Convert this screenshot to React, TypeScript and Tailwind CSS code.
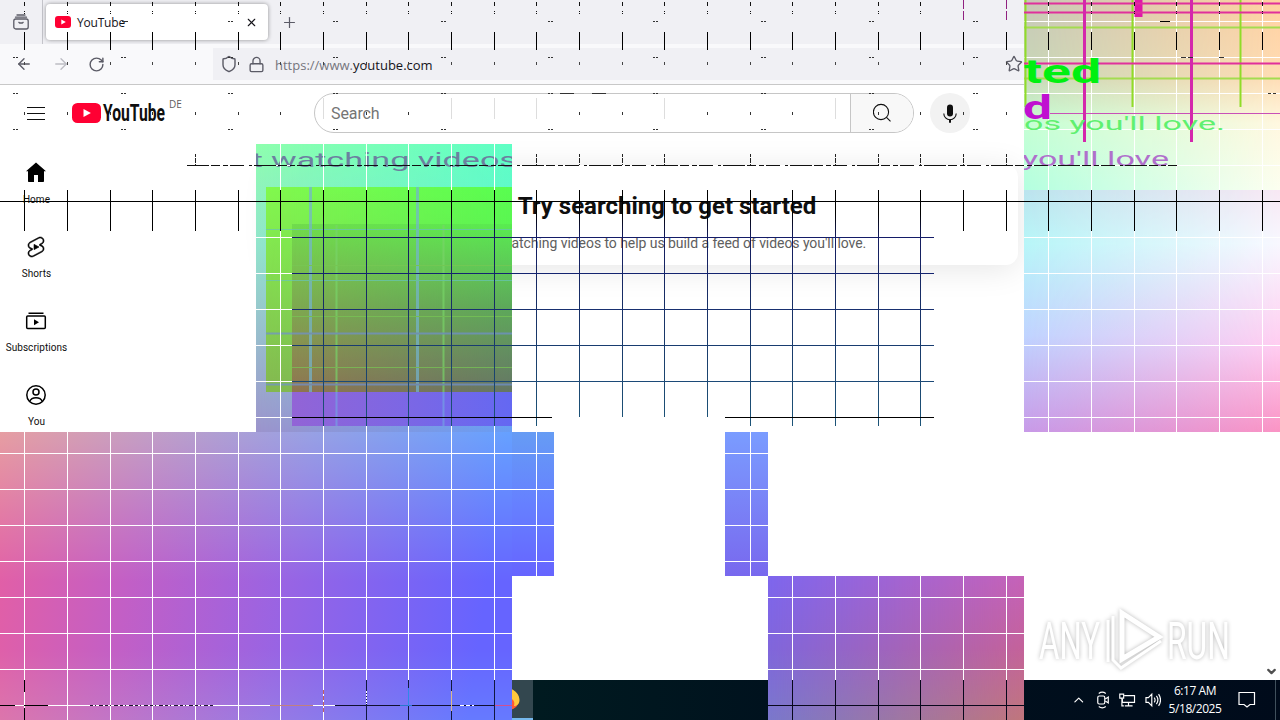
import type { ReactNode } from 'react'
import { ArrowLeft, ArrowRight, ChevronDown, ChevronUp, Lock, Plus, RotateCw, Shield, Star, X } from 'lucide-react'

// grid columns sit 42.67px apart, rows 36px apart
const COLS = [
  24, 67, 110, 152, 195, 238, 280, 323, 366, 408, 451, 494, 536, 579, 622, 664, 707, 750, 792, 835, 878, 920, 963,
  1006, 1048, 1091, 1134, 1176, 1219, 1262,
]
const ROWS = [21, 57, 93, 129, 165, 201, 237, 273, 309, 345, 381, 417, 453, 489, 525, 561, 597, 633, 669, 705]
const DASHES = [13, 121, 228, 333, 441, 548, 653, 761, 869, 973]

export default function App() {
  return (
    <div className="relative flex h-[720px] w-[1280px] flex-col overflow-hidden bg-white font-['Open_Sans',sans-serif]">
      <TabStrip />
      <Toolbar />
      <Masthead />
      <div className="flex min-h-0 flex-1">
        <Sidebar />
        <Feed />
      </div>
      <Taskbar />
      <GlitchBlocks />
      <GlitchLines />
    </div>
  )
}

function TabStrip() {
  return (
    <div className="flex h-11 shrink-0 bg-[#f0f0f4] text-[#15141a]">
      <div className="flex w-[43px] items-center justify-center border-r border-[#c4c4ca] pr-px">
        <svg width="16" height="16" viewBox="0 0 16 16" fill="none" stroke="#5b5b66" strokeWidth="1.3">
          <path d="M2.5 3.2h11M4 1h8" strokeLinecap="round" />
          <rect x="0.8" y="5" width="14.4" height="10" rx="2" />
          <path d="M5.5 8l1.2 1h2.6l1.2-1" />
        </svg>
      </div>
      <div className="mt-1 ml-[3px] flex h-9 w-[222px] items-center rounded bg-white pr-[10px] pl-[9px] shadow-[0_0_4px_rgba(0,0,0,0.4)]">
        <svg width="16" height="12" viewBox="0 0 16 12">
          <rect width="16" height="12" rx="3" fill="#ff0033" />
          <path d="M6.3 3.4v5.2L10.8 6z" fill="#fff" />
        </svg>
        <span className="mt-px ml-[6px] flex-1 text-xs tracking-[-0.2px]">YouTube</span>
        <X size={13} strokeWidth={2} />
      </div>
      <div className="flex items-center pl-[13px] text-[#5b5b66]">
        <Plus size={17} strokeWidth={1.7} />
      </div>
    </div>
  )
}

function Toolbar() {
  return (
    <div className="flex h-[41px] shrink-0 items-center border-b border-[#c8c8c8] bg-[#f9f9fb] text-[#5b5b66]">
      <div className="flex w-[213px] items-center pl-[15px]">
        <ArrowLeft size={18} strokeWidth={1.8} />
        <ArrowRight size={18} strokeWidth={1.8} className="ml-[19px] text-[#bdbdc4]" />
        <RotateCw size={17} strokeWidth={2} className="ml-[18px]" />
      </div>
      <div className="flex h-8 w-[840px] items-center bg-[#f0f0f4] pl-[7px]">
        <Shield size={18} strokeWidth={1.9} />
        <Lock size={17} strokeWidth={1.9} className="ml-[10px]" />
        <span className="mt-[3px] ml-[10px] w-[730px] text-[13px] text-[#75757d]">
          https://www.<span className="text-[#15141a]">youtube.com</span>
        </span>
        <Star size={18} strokeWidth={1.8} />
      </div>
    </div>
  )
}

function Masthead() {
  return (
    <div className="flex h-14 shrink-0 items-center pl-[27px] font-[Roboto,sans-serif]">
      <div className="flex h-[13px] w-[18px] flex-col justify-between">
        <div className="h-px bg-[#0f0f0f]" />
        <div className="h-px bg-[#0f0f0f]" />
        <div className="h-px bg-[#0f0f0f]" />
      </div>
      <svg width="94" height="30" viewBox="0 0 94 30" className="ml-[27px]">
        <rect y="5" width="29" height="20" rx="5.5" fill="#ff0033" />
        <path d="M11.5 11v8l7.4-4z" fill="#fff" />
        <text x="31" y="23.200" fontFamily="Roboto" fontWeight="700" fontSize="23" textLength="62" lengthAdjust="spacingAndGlyphs" fill="#0f0f0f">
          YouTube
        </text>
      </svg>
      <span className="mb-[18px] ml-[3px] w-[20px] font-['Open_Sans',sans-serif] text-[10px] text-[#606060]">DE</span>
      <div className="ml-[125px] flex h-10 w-[600px] overflow-hidden rounded-full border border-[#c6c6c6]">
        <div className="flex w-[536px] items-center border-r border-[#c6c6c6] pt-px pl-4 text-base tracking-[-0.1px] text-[#757575]">
          Search
        </div>
        <div className="flex flex-1 items-center justify-center bg-[#f8f8f8]">
          <svg width="18" height="20" viewBox="0 0 18 20" fill="none" stroke="#0f0f0f" strokeWidth="1.1">
            <circle cx="8" cy="9" r="7.6" />
            <path d="M13.5 14.4l4 4" />
          </svg>
        </div>
      </div>
      <div className="ml-4 flex size-10 items-center justify-center rounded-full bg-[#f2f2f2]">
        <svg width="14" height="19" viewBox="0 0 14 19" fill="none" stroke="#0f0f0f">
          <rect x="4" y="0.5" width="6" height="12" rx="3" fill="#0f0f0f" stroke="none" />
          <path d="M.8 9.5a6.2 6.2 0 0 0 12.4 0" strokeWidth="1.1" />
          <path d="M7 15.5v3.2" strokeWidth="2" />
        </svg>
      </div>
    </div>
  )
}

function SidebarItem({ label, children }: { label: string; children: ReactNode }) {
  return (
    <div className="flex h-[74px] flex-col items-center pt-4 text-[10px] leading-[14px] text-[#0f0f0f]">
      <svg width="24" height="24" viewBox="0 0 24 24">{children}</svg>
      <span className="mt-2 pl-px tracking-[0.05px]">{label}</span>
    </div>
  )
}

function Sidebar() {
  return (
    <div className="w-[72px] pt-[4px] font-[Roboto,sans-serif]">
      <SidebarItem label="Home">
        <path d="M12 1.5 2 10.300h2V20c0 .6.4 1 1 1h5v-7h4v7h5c.6 0 1-.4 1-1v-9.700h2z" />
      </SidebarItem>
      <SidebarItem label="Shorts">
        <path d="M10 14.65v-5.3L15 12l-5 2.65zm7.77-4.33-1.2-.5L18 9.06c1.84-.96 2.53-3.23 1.56-5.06s-3.24-2.53-5.07-1.56L6 6.94c-1.29.68-2.07 2.04-2 3.49.07 1.42.93 2.67 2.22 3.25.03.01 1.2.5 1.2.5L6 14.93c-1.83.97-2.53 3.24-1.56 5.07.97 1.83 3.24 2.53 5.07 1.56l8.5-4.5c1.29-.68 2.06-2.04 1.99-3.49-.07-1.42-.94-2.68-2.23-3.25zm-.23 5.86-8.5 4.5c-1.34.71-3.01.2-3.72-1.14-.71-1.34-.2-3.01 1.14-3.72l2.04-1.08v-1.21l-.69-.28-1.11-.46c-.99-.41-1.65-1.35-1.7-2.41-.05-1.06.52-2.06 1.46-2.56l8.5-4.5c1.34-.71 3.01-.2 3.72 1.14.71 1.34.2 3.01-1.14 3.72L15.5 9.26v1.21l1.8.74c.99.41 1.65 1.35 1.7 2.41.05 1.06-.52 2.06-1.46 2.56z" stroke="#000" strokeWidth="0.6" />
      </SidebarItem>
      <SidebarItem label="Subscriptions">
        <rect x="2.700" y="7" width="18.600" height="12.600" rx="1" fill="none" stroke="#000" strokeWidth="1.5" />
        <path d="M4.500 3.500h15v1.500h-15zM10 10.300v6l5-3z" />
      </SidebarItem>
      <SidebarItem label="You">
        <g fill="none" stroke="#000" strokeWidth="1.5">
          <circle cx="12" cy="12" r="9.200" />
          <circle cx="12" cy="9" r="3" />
          <path d="M5.700 18.500c1-2.600 3.300-3.800 6.300-3.800s5.300 1.200 6.300 3.800" />
        </g>
      </SidebarItem>
    </div>
  )
}

function Feed() {
  return (
    <div className="relative flex-1 pt-6 pl-[202px] font-[Roboto,sans-serif]">
      <div className="flex h-[100px] w-[744px] flex-col items-center rounded-xl bg-white pt-[25px] pl-[42px] shadow-[0_4px_32px_rgba(0,0,0,0.1)]">
        <h1 className="text-2xl leading-8 font-bold text-[#0f0f0f]">Try searching to get started</h1>
        <p className="mt-[11px] text-sm leading-5 tracking-[-0.06px] text-[#606060]">
          Start watching videos to help us build a feed of videos you&apos;ll love.
        </p>
      </div>
      <ChevronDown size={13} strokeWidth={4} className="absolute right-[2px] bottom-[2px] text-[#505050]" />
      <Watermark />
    </div>
  )
}

function Watermark() {
  return (
    <svg
      width="204"
      height="76"
      viewBox="0 0 204 76"
      className="absolute right-[42px] bottom-0 drop-shadow-[0_0_2px_rgba(0,0,0,0.28)]"
    >
      <g fill="#fff" fontFamily="Roboto" fontWeight="400" fontSize="51">
        <text x="5" y="55" textLength="61" lengthAdjust="spacingAndGlyphs">ANY</text>
        <text x="133" y="55" textLength="63" lengthAdjust="spacingAndGlyphs">RUN</text>
      </g>
      <g fill="none" stroke="#fff" strokeWidth="5">
        <path d="M88 9v46l37-22z" />
        <path d="M79 12v44l8 8 40-27M74 16v42" strokeWidth="3" />
      </g>
    </svg>
  )
}

function Taskbar() {
  return (
    <div className="flex h-10 shrink-0 bg-linear-to-r from-[#001b20] from-40% via-[#00121e] via-60% to-[#000b1b] text-white">
      <div className="ml-[485px] flex w-12 items-center justify-center border-b-2 border-[#76b9ed] bg-[#33474f]">
        <svg width="24" height="24" viewBox="0 0 24 24">
          <circle cx="12" cy="13" r="10" fill="#ff5a36" />
          <path d="M13 1c6 3 9.500 7 9.500 12 0 4-3 6-5.500 6 1-4 0-6-4-8z" fill="#ffc83e" />
        </svg>
      </div>
      <div className="ml-[538px] flex w-[90px] items-center gap-[9px]">
        <ChevronUp size={16} strokeWidth={1.8} />
        <svg width="15" height="18" viewBox="0 0 14 18" fill="none" stroke="#fff" strokeWidth="1.2">
          <rect x="1.500" y="5" width="7" height="8" rx="1.500" />
          <path d="M9 8l3-2v6l-3-2M2.500 2.500c2-1.500 5-1.500 7 0M2.500 15.500c2 1.500 5 1.500 7 0" />
        </svg>
        <svg width="17" height="14" viewBox="0 0 17 14" fill="none" stroke="#fff" strokeWidth="1.200">
          <path d="M5.500 2.500H16v7H3.500V6M9.800 9.500v3.500M6 13h8M.8 1h4v4h-4zM3 5v8h2" />
        </svg>
        <svg width="17" height="16" viewBox="0 0 17 16" fill="none" stroke="#fff" strokeWidth="1.200">
          <path d="M1 5.500h2.500L7 2v12l-3.500-3.500H1zM9.500 5.500q1.800 2.500 0 5M11.800 3.800q3 4.200 0 8.400M14 2q4 6 0 12" />
        </svg>
      </div>
      <div className="ml-[3px] flex w-[62px] flex-col items-center justify-center text-xs leading-[18px] tracking-[-0.45px]">
        <span>6:17 AM</span>
        <span>5/18/2025</span>
      </div>
      <svg width="18" height="18" viewBox="0 0 18 18" fill="none" stroke="#fff" strokeWidth="1.200" className="mt-[11px] ml-[12px]">
        <path d="M1 1.500h15.500v12H12L9 16l-3-2.500H1z" />
      </svg>
      <div className="ml-[19px] w-px bg-[#40505c]" />
    </div>
  )
}

// Two vertical ramps, the second one faded in from the left.
function Ramp({ className, left, right }: { className: string; left: string; right: string }) {
  return (
    <div className={`absolute ${className}`}>
      <div className={`absolute inset-0 ${left}`} />
      <div className={`absolute inset-0 [mask-image:linear-gradient(to_right,transparent,black)] ${right}`} />
    </div>
  )
}

function GlitchBlocks() {
  return (
    <>
      <div className="absolute top-[432px] left-0 h-[288px] w-[512px] bg-[linear-gradient(to_bottom,#006400,#000000_52%,#000000_75%,#002400),linear-gradient(98deg,#e65fa2,#c25fc6_27%,#9864e4_56%,#6664ff_92%)] bg-blend-screen" />
      <Ramp
        className="top-[144px] left-[256px] h-[288px] w-[256px]"
        left="bg-linear-to-b from-[#8effae] via-[#92e4cc] via-35% to-[#9c94cc]"
        right="bg-linear-to-b from-[#5effc4] via-[#60f4d0] via-35% to-[#689cf4]"
      />
      <Ramp
        className="top-[187px] left-[266px] h-[205px] w-[246px] opacity-95"
        left="bg-linear-to-b from-[#82fa48] to-[#84b84a]"
        right="bg-linear-to-b from-[#58ff4a] to-[#5ccc50]"
      />
      <Ramp
        className="top-[224px] left-[292px] h-[168px] w-[220px]"
        left="bg-linear-to-b from-[#70dc4c] via-[#7ea850] to-[#907450]"
        right="bg-linear-to-b from-[#58ec50] via-[#5ca85a] to-[#647664]"
      />
      <div className="absolute top-[392px] left-[292px] h-[34px] w-[220px] bg-linear-to-r from-[#9264d6] to-[#6468f2]" />
      <div className="absolute top-[432px] left-[512px] h-[144px] w-[42px] bg-linear-to-b from-[#669cf4] via-[#6680ff] to-[#6664ff]" />
      <div className="absolute top-[432px] left-[725px] h-[144px] w-[43px] bg-linear-to-b from-[#7a9cff] to-[#7868ee]" />
      <Ramp
        className="top-[576px] left-[768px] h-[144px] w-[256px]"
        left="bg-linear-to-b from-[#7e66ee] via-[#8066dc] to-[#7a78cc]"
        right="bg-linear-to-b from-[#c662b8] via-[#c4629a] to-[#c0767c]"
      />
      <Ramp
        className="top-0 left-[1024px] h-[190px] w-[256px]"
        left="bg-[linear-gradient(to_bottom,#c8c8b8,#c8d8b8_40%,#c6ffd4_65%,#b4ffe0)]"
        right="bg-[linear-gradient(to_bottom,#ffd0a0,#ffdcb4_40%,#fff8e0_65%,#fcfff0)]"
      />
      <Ramp
        className="top-[190px] left-[1024px] h-[242px] w-[256px]"
        left="bg-[linear-gradient(to_bottom,#bce4ee,#b8f6f8_22%,#c0d4ff_60%,#c89ae8)]"
        right="bg-[linear-gradient(to_bottom,#f8e8f4,#f8f8ff_22%,#ffccf0_65%,#fa94c4)]"
      />
    </>
  )
}

interface LineProps {
  at: number
  from: number
  to: number
  color?: string
  size?: number
  dash?: string
}

function V({ at, from, to, color = '#000', size = 1, dash }: LineProps) {
  return <line x1={at + 0.5} x2={at + 0.5} y1={from} y2={to} stroke={color} strokeWidth={size} strokeDasharray={dash} />
}

function H({ at, from, to, color = '#000', size = 1, dash }: LineProps) {
  return <line y1={at + 0.5} y2={at + 0.5} x1={from} x2={to} stroke={color} strokeWidth={size} strokeDasharray={dash} />
}

function GlitchLines() {
  return (
    <svg width="1280" height="720" viewBox="0 0 1280 720" className="pointer-events-none absolute inset-0">
      <defs>
        <clipPath id="mid"><rect x="256" y="144" width="256" height="288" /></clipPath>
        <clipPath id="right"><rect x="1024" width="256" height="432" /></clipPath>
        <linearGradient id="navy" gradientUnits="userSpaceOnUse" x1="0" y1="190" x2="0" y2="426">
          <stop offset="0.1" stopColor="#000" />
          <stop offset="0.2" stopColor="#141c60" />
          <stop offset="0.6" stopColor="#183668" />
          <stop offset="1" stopColor="#1c5478" />
        </linearGradient>
      </defs>

      {/* ghost lines in the green block */}
      <g clipPath="url(#mid)">
        <g opacity="0.7">
          {[310, 417].map((x) => <V key={x} at={x} from={187} to={392} color="#74b4d0" size={3} />)}
          {[336, 443].map((x) => <V key={x} at={x} from={225} to={392} color="#78d468" size={2} />)}
          {[336, 443].map((x) => <V key={x} at={x} from={392} to={426} color="#74a0e4" size={2} />)}
          {[229, 280].map((y) => <H key={y} at={y} from={266} to={512} color="#68c4b8" />)}
          {[333, 384].map((y) => <H key={y} at={y} from={266} to={512} color="#7090d0" size={2} />)}
          {[265, 316, 367].map((y) => <H key={y} at={y} from={292} to={512} color="#78c854" />)}
        </g>
        <text x="251" y="167" fontFamily="Roboto" fontSize="21" fill="#6c80a0" textLength="12" lengthAdjust="spacingAndGlyphs">t</text>
        <text x="271" y="167" fontFamily="Roboto" fontSize="21" fill="#6c80a0" textLength="246" lengthAdjust="spacingAndGlyphs">
          watching videos
        </text>
      </g>

      {/* white grid over the coloured blocks */}
      {COLS.filter((x) => x < 512).map((x) => (
        <V key={x} at={x} from={x > 256 ? (x < 292 ? 144 : 426) : 432} to={720} color="#fff" />
      ))}
      {COLS.filter((x) => x > 292 && x < 512).map((x) => <V key={x} at={x} from={144} to={190} color="#fff" />)}
      {[536, 750].map((x) => <V key={x} at={x} from={432} to={576} color="#fff" />)}
      {COLS.filter((x) => x > 768 && x < 1024).map((x) => <V key={x} at={x} from={576} to={680} color="#fff" />)}
      {COLS.filter((x) => x > 1024).map((x) => <V key={x} at={x} from={0} to={432} color="#fff" />)}
      {ROWS.filter((y) => y > 432).map((y) => <H key={y} at={y} from={0} to={512} color="#fff" />)}
      {ROWS.filter((y) => y > 144 && y < 432).map((y) => <H key={y} at={y} from={256} to={292} color="#fff" />)}
      {ROWS.filter((y) => y < 432).map((y) => <H key={y} at={y} from={1024} to={1280} color="#fff" />)}
      {[453, 489, 525, 561].map((y) => (
        <g key={y}>
          <H at={y} from={512} to={554} color="#fff" />
          <H at={y} from={725} to={768} color="#fff" />
        </g>
      ))}
      {[597, 633, 669].map((y) => <H key={y} at={y} from={768} to={1024} color="#fff" />)}

      {/* right block */}
      <g clipPath="url(#right)">
        {[27, 78].map((y) => <H key={y} at={y} from={1024} to={1280} color="#a4dc50" size={2} />)}
        {[1025, 1132, 1240].map((x) => <V key={x} at={x} from={0} to={107} color="#90dc28" size={2} />)}
        <V at={1138} from={0} to={17} color="#e018a8" size={8} />
        {[3, 12, 63].map((y) => <H key={y} at={y} from={1024} to={1280} color="#e0309c" size={2} />)}
        <H at={113} from={1050} to={1280} color="#c850b8" />
        {[1084, 1191].map((x) => <V key={x} at={x} from={0} to={142} color="#d428ac" size={3} />)}
        <g fontFamily="Roboto">
          <text x="1024" y="83" fontSize="34" fontWeight="700" fill="#00f010" textLength="77" lengthAdjust="spacingAndGlyphs">ted</text>
          <text x="1023" y="118.500" fontSize="34" fontWeight="700" fill="#c010d0" textLength="29" lengthAdjust="spacingAndGlyphs">d</text>
          <text x="1024" y="130" fontSize="19" fill="#60f070" textLength="201" lengthAdjust="spacingAndGlyphs">os you&apos;ll love.</text>
          <text x="1022" y="166" fontSize="21" fill="#b070cc" textLength="147" lengthAdjust="spacingAndGlyphs">you&apos;ll love</text>
        </g>
      </g>

      {/* black ticks along the browser chrome */}
      {COLS.map((x) => (
        <g key={x}>
          <V at={x} from={2} to={14} color={x > 950 && x < 1024 ? '#901878' : '#111'} dash="4 5 1 1" />
          <V at={x} from={32} to={50} />
          {x < 1024 && <V at={x} from={62} to={65} color="#444" />}
          {x < 1024 && <V at={x} from={112} to={115} color="#333" />}
          {(x < 300 || x > 950) && <V at={x} from={190} to={231} />}
        </g>
      ))}
      {[963, 1006].map((x) => <V key={x} at={x} from={0} to={21} color="#902080" dash="9 2" />)}
      {[323, 451, 494, 536, 664, 835].map((x) => <V key={x} at={x} from={98} to={119} color="#ddd" />)}
      {DASHES.map((x) =>
        [21, 57, 93, 129].map((y) => (y === 21 && x < 200 ? null : <H key={`${x}-${y}`} at={y} from={x} to={x + 6} color="#333" dash="2 1" />)),
      )}
      <H at={21} from={122} to={128} color="#333" />
      <H at={93} from={560} to={610} color="#333" dash="14 18" />
      <H at={21} from={1160} to={1170} />
      <H at={57} from={1181} to={1224} color="#333" dash="5 2 5 26" />
      <H at={93} from={1268} to={1276} color="#333" dash="3 2" />

      <H at={165} from={187} to={1177} color="#111" dash="22 2 9 3 5 2 14 5 3 2" />
      {[195, 536, 579, 622, 664, 750, 835, 878, 920, 963, 1006].map((x) => (
        <V key={x} at={x} from={154} to={165} color="#222" dash="3 1 5 1" />
      ))}
      <H at={201} from={0} to={1280} />

      {/* navy grid across the feed */}
      {COLS.filter((x) => x > 300 && x < 950).map((x) => (
        <rect key={x} x={x} y={190} width={1} height={(x > 554 && x < 725 ? 417 : 426) - 190} fill="url(#navy)" />
      ))}
      <H at={237} from={292} to={934} color="#141c68" />
      <H at={273} from={292} to={934} color="#142470" />
      <H at={309} from={292} to={934} color="#183070" />
      <H at={345} from={292} to={934} color="#183c70" />
      <H at={381} from={292} to={934} color="#1c4a78" />
      <H at={417} from={292} to={552} />
      <H at={417} from={725} to={934} />

      {/* taskbar remnants */}
      <V at={24} from={680} to={692} />
      <V at={24} from={708} to={720} />
      <H at={705} from={0} to={15} />
      <H at={705} from={24} to={48} />
      <H at={705} from={90} to={215} color="#201830" dash="3 2 1 3 4 2" />
      <H at={705} from={270} to={313} color="#c08080" />
      <H at={705} from={335} to={512} color="#101030" />
      <H at={705} from={460} to={474} color="#fff" dash="4 2" />
      <H at={705} from={400} to={412} color="#2878d0" />
      <H at={705} from={495} to={512} color="#d05090" />
      <V at={323} from={690} to={712} color="#c06060" dash="4 2" />
      {[366, 408, 451, 494].map((x) => <V key={x} at={x} from={680} to={720} color="#101840" />)}
      <V at={366} from={691} to={704} color="#fff" dash="2 1" />
      <V at={408} from={688} to={706} color="#3088e8" />
      <V at={451} from={691} to={711} color="#d8b890" />
      {COLS.filter((x) => x > 768 && x < 1024).map((x) => <V key={x} at={x} from={680} to={720} color="#08081c" />)}
      <H at={705} from={768} to={1024} color="#08081c" />
    </svg>
  )
}
